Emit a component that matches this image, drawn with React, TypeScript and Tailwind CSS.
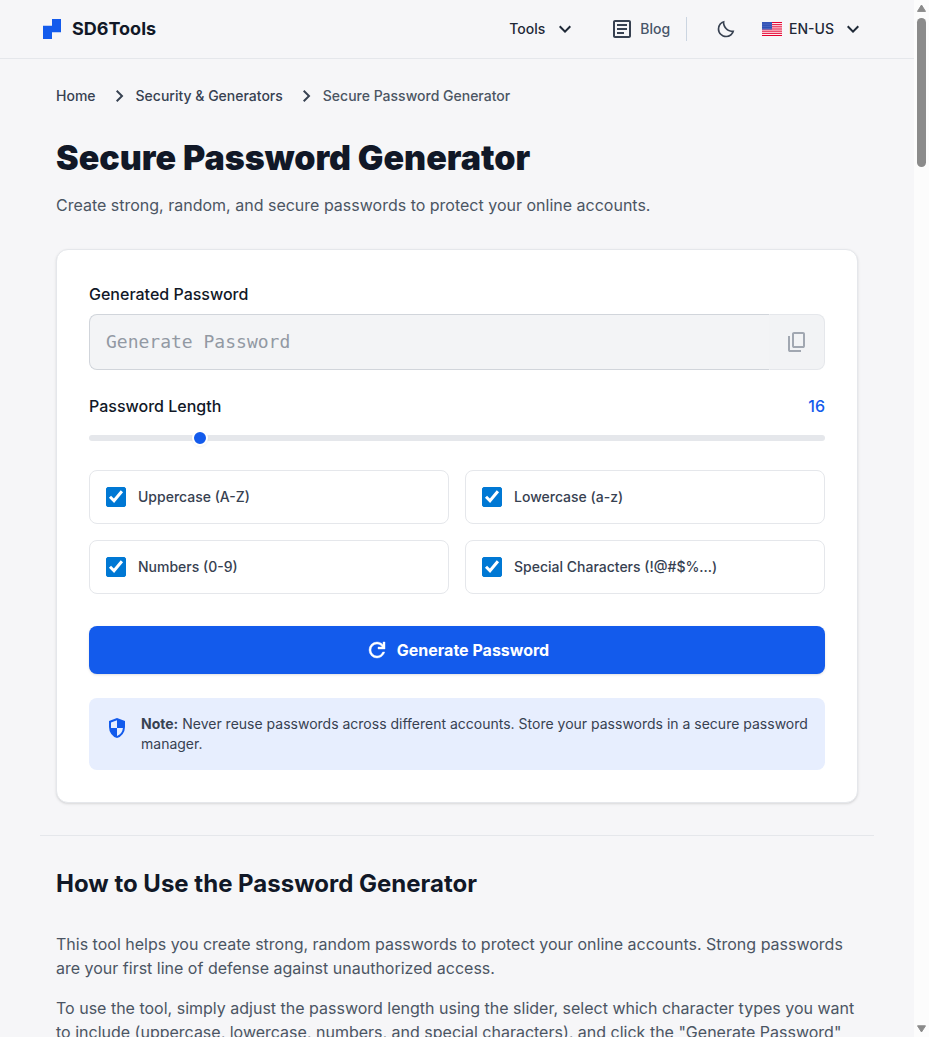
import { useState } from "react";
import { MdExpandMore, MdOutlineArticle } from "react-icons/md";

const ICONS = {
  chevronRight: "M12.6 12 8 7.4 9.4 6l6 6-6 6L8 16.6z",
  copy: "M9 18q-.825 0-1.412-.587T7 16V4q0-.825.588-1.412T9 2h9q.825 0 1.413.588T20 4v12q0 .825-.587 1.413T18 18zm0-2h9V4H9zm-4 6q-.825 0-1.412-.587T3 20V6h2v14h11v2z",
  moon: "M12.1 22q-2.1 0-3.937-.8t-3.2-2.163t-2.163-3.2T2 11.9q0-3.65 2.325-6.437T10.25 2q-.45 2.475.275 4.838t2.5 4.137t4.138 2.5T22 13.75q-.65 3.6-3.45 5.925T12.1 22m0-2q2.2 0 4.075-1.1t2.95-3.025q-2.15-.2-4.075-1.088t-3.45-2.412t-2.425-3.45T8.1 4.875Q6.175 5.95 5.088 7.838T4 11.9q0 3.375 2.363 5.738T12.1 20",
  refresh:
    "M12 20q-3.35 0-5.675-2.325T4 12t2.325-5.675T12 4q1.725 0 3.3.712T18 6.75V4h2v7h-7V9h4.2q-.8-1.4-2.187-2.2T12 6Q9.5 6 7.75 7.75T6 12t1.75 4.25T12 18q1.925 0 3.475-1.1T17.65 14h2.1q-.7 2.65-2.85 4.325T12 20",
  shield:
    "M12 22q-3.475-.875-5.737-3.988T4 11.1V5l8-3 8 3v6.1q0 3.8-2.262 6.913T12 22m0-2.1q2.425-.75 4.05-2.963T17.95 12H12V4.125l-6 2.25v5.175q0 .175.05.45H12z",
};

function Icon({ name, className, bold }: { name: keyof typeof ICONS; className: string; bold?: boolean }) {
  return (
    <svg className={className} viewBox="0 0 24 24" fill="currentColor" aria-hidden="true">
      <path d={ICONS[name]} stroke="currentColor" strokeWidth={bold ? 0.4 : 0} />
    </svg>
  );
}

function Logo() {
  return (
    <svg className="h-5 w-[18px]" viewBox="0 0 18 20" aria-hidden="true">
      <path fill="#135bec" d="M9 0h9v13.3H9V20H0V6.7h9z" />
    </svg>
  );
}

function UsFlag() {
  const stars = [];
  for (let row = 0; row < 4; row++) {
    for (let col = 0; col < 5; col++) {
      stars.push(<circle key={`${row}-${col}`} cx={1 + col * 2} cy={1 + row * 1.8} r="0.35" fill="#b9c7ee" />);
    }
  }
  return (
    <svg className="h-[14px] w-5" viewBox="0 0 20 14" aria-hidden="true">
      <rect width="20" height="14" fill="#fff" />
      {[0, 1, 2, 3, 4, 5, 6].map((i) => (
        <rect key={i} y={(i * 28) / 13} width="20" height={14 / 13} fill="#e4002f" />
      ))}
      <rect width="10" height="7.5" fill="#2f50b5" />
      {stars}
    </svg>
  );
}

function Header() {
  return (
    <header className="border-b border-[#e5e7eb]">
      <div className="flex h-[58px] items-center justify-between pr-[49px] pl-[43px] text-sm font-medium text-[#1f2937]">
        <a href="#" className="flex items-center gap-[11px] text-lg font-bold text-[#111827]">
          <Logo />
          SD6Tools
        </a>
        <nav className="flex items-center">
          <button type="button" className="flex items-center gap-2">
            Tools
            <MdExpandMore className="size-6" />
          </button>
          <a href="#" className="ml-[33px] flex items-center gap-[6px] text-[#475569]">
            <MdOutlineArticle className="size-6 text-[#374151]" />
            Blog
          </a>
          <span className="ml-4 h-6 w-px bg-[#cbd5e1]" />
          <button type="button" aria-label="Dark mode" className="ml-[29px] text-[#374151]">
            <Icon name="moon" className="size-5" />
          </button>
          <button type="button" className="ml-[26px] flex items-center gap-[7px]">
            <UsFlag />
            EN-US
            <MdExpandMore className="size-6" />
          </button>
        </nav>
      </div>
    </header>
  );
}

function Breadcrumb() {
  return (
    <nav aria-label="Breadcrumb" className="flex h-5 items-center gap-1 text-sm font-medium text-[#374151]">
      <a href="#">Home</a>
      <Icon name="chevronRight" className="ml-2 size-6" />
      <a href="#">Security &amp; Generators</a>
      <Icon name="chevronRight" className="ml-2 size-6" />
      <span className="text-[#4b5563]">Secure Password Generator</span>
    </nav>
  );
}

const OPTIONS = [
  { id: "uppercase", label: "Uppercase (A-Z)" },
  { id: "lowercase", label: "Lowercase (a-z)" },
  { id: "numbers", label: "Numbers (0-9)" },
  { id: "special", label: "Special Characters (!@#$%...)" },
];

function Option({ id, label }: { id: string; label: string }) {
  return (
    <label
      htmlFor={id}
      className="flex items-center gap-3 rounded-lg border border-[#e5e7eb] p-4 text-sm font-medium text-[#374151]"
    >
      <span className="relative flex size-5">
        <input
          id={id}
          type="checkbox"
          defaultChecked
          className="peer size-5 appearance-none rounded-[2px] border border-[#767676] bg-white checked:border-[#0078d4] checked:bg-[#0078d4]"
        />
        <svg
          className="pointer-events-none absolute inset-0 hidden size-5 peer-checked:block"
          viewBox="0 0 20 20"
          aria-hidden="true"
        >
          <path d="M4 9.8 8 13.8 15.9 4.2" fill="none" stroke="#fff" strokeWidth="3" />
        </svg>
      </span>
      {label}
    </label>
  );
}

function GeneratorCard() {
  const [length, setLength] = useState(16);
  return (
    <section className="mt-8 rounded-xl border border-[#e5e7eb] bg-white p-8 shadow-sm">
      <label htmlFor="password" className="block font-medium text-[#111827]">
        Generated Password
      </label>
      <div className="mt-2 flex h-14">
        <input
          id="password"
          readOnly
          placeholder="Generate Password"
          className="min-w-0 flex-1 rounded-l-lg border border-r-0 border-[#d1d5db] bg-[#f3f4f6] px-4 font-['DejaVu_Sans_Mono',monospace] text-lg outline-none placeholder:text-[#9299a3]"
        />
        <button
          type="button"
          aria-label="Copy password"
          className="flex w-14 items-center justify-center rounded-r-lg border border-[#e5e7eb] border-l-transparent bg-[#f2f3f5] text-[#a1a7b1]"
        >
          <Icon name="copy" className="size-6" />
        </button>
      </div>

      <div className="mt-6 flex justify-between font-medium">
        <label htmlFor="length" className="text-[#111827]">
          Password Length
        </label>
        <output htmlFor="length" className="text-[#135bec]">
          {length}
        </output>
      </div>
      <div className="mt-3 flex h-4 items-center">
        <input
          id="length"
          type="range"
          min={8}
          max={64}
          value={length}
          onChange={(e) => setLength(Number(e.target.value))}
          className="h-[6px] w-full appearance-none rounded-full bg-[#e5e7eb] [&::-webkit-slider-thumb]:size-4 [&::-webkit-slider-thumb]:appearance-none [&::-webkit-slider-thumb]:rounded-full [&::-webkit-slider-thumb]:border-2 [&::-webkit-slider-thumb]:border-white [&::-webkit-slider-thumb]:bg-[#135bec] [&::-webkit-slider-thumb]:shadow-xs"
        />
      </div>

      <div className="mt-6 grid grid-cols-2 gap-4">
        {OPTIONS.map((option) => (
          <Option key={option.id} id={option.id} label={option.label} />
        ))}
      </div>

      <button
        type="button"
        className="mt-8 flex h-12 w-full items-center justify-center gap-2 rounded-lg bg-[#135bec] font-bold text-white shadow-sm"
      >
        <Icon name="refresh" className="size-6" bold />
        Generate Password
      </button>

      <div className="mt-6 flex gap-3 rounded-lg bg-[#e7eefe] p-4 text-sm text-[#374151]">
        <Icon name="shield" className="mt-[2px] size-6 shrink-0 text-[#135bec]" />
        <p>
          <strong className="font-bold">Note:</strong> Never reuse passwords across different accounts. Store your
          passwords in a secure password manager.
        </p>
      </div>
    </section>
  );
}

function Guide() {
  return (
    <section className="border-t border-[#e5e7eb] px-4 pt-8 text-[#4b5563]">
      <h2 className="mb-8 text-2xl font-bold text-[#111827]">How to Use the Password Generator</h2>
      <p className="mb-4">
        This tool helps you create strong, random passwords to protect your online accounts. Strong passwords are your
        first line of defense against unauthorized access.
      </p>
      <p>
        To use the tool, simply adjust the password length using the slider, select which character types you want to
        include (uppercase, lowercase, numbers, and special characters), and click the "Generate Password" button.
      </p>
    </section>
  );
}

function Scrollbar() {
  return (
    <div className="flex w-[15px] shrink-0 flex-col items-center bg-[#fcfcfc] text-[#8b8b8b]" aria-hidden="true">
      <svg className="mt-1 h-2 w-[9px]" viewBox="0 0 9 8">
        <path d="M4.5 1 8.5 7.4H.5z" fill="currentColor" stroke="currentColor" strokeLinejoin="round" />
      </svg>
      <span className="mt-[6px] h-[149px] w-[9px] rounded-full bg-[#8b8b8b]" />
      <svg className="mt-auto mb-1 h-2 w-[9px]" viewBox="0 0 9 8">
        <path d="M4.5 7 8.5.8H.5z" fill="currentColor" stroke="currentColor" strokeLinejoin="round" />
      </svg>
    </div>
  );
}

export default function App() {
  return (
    <div className="flex h-screen overflow-hidden bg-[#f6f6f8] font-['Inter',sans-serif]">
      <div className="min-w-0 flex-1 overflow-hidden">
        <Header />
        <main className="mx-auto max-w-5xl px-10 pt-[27px]">
          <div className="px-4 pb-8">
            <Breadcrumb />
            <h1 className="mt-8 text-[34px] leading-10 font-black text-[#111827]">Secure Password Generator</h1>
            <p className="mt-[15px] text-[#4b5563]">
              Create strong, random, and secure passwords to protect your online accounts.
            </p>
            <GeneratorCard />
          </div>
          <Guide />
        </main>
      </div>
      <Scrollbar />
    </div>
  );
}
